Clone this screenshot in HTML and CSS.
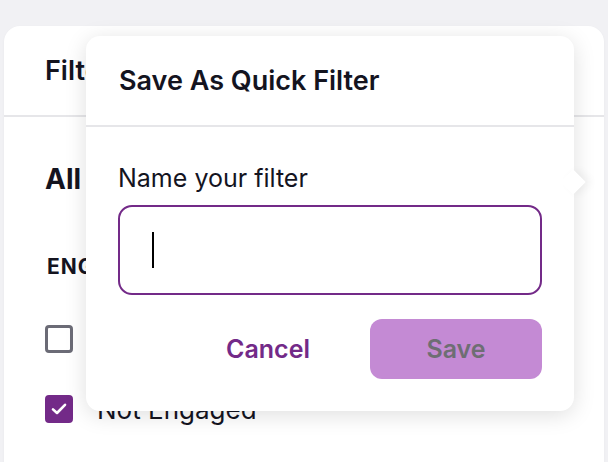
FILE: index.html
```html
<!DOCTYPE html>
<html>
<head>
<meta charset="utf-8">
<link rel="stylesheet" href="styles.css">
</head>
<body>
<div class="card">
  <div class="card-header"><span class="card-title">Filters</span></div>
  <div class="card-body">
    <div class="view-title">All</div>
    <div class="section-label">ENGAGEMENT</div>
    <ul class="options">
      <li class="option"><span class="checkbox"></span><span class="option-label">Engaged</span></li>
      <li class="option"><span class="checkbox checked"><svg viewBox="0 0 20 20" width="20" height="20"><path d="M4 10.4 L8 14 L16 5.8" fill="none" stroke="#fff" stroke-width="2.6" stroke-linecap="round" stroke-linejoin="round"/></svg></span><span class="option-label">Not Engaged</span></li>
    </ul>
  </div>
  <div class="popover">
    <div class="popover-header">Save As Quick Filter</div>
    <div class="popover-body">
      <label class="field-label">Name your filter</label>
      <div class="text-field"><span class="caret"></span></div>
      <div class="actions">
        <button class="btn btn-cancel">Cancel</button>
        <button class="btn btn-save">Save</button>
      </div>
    </div>
  </div>
</div>
</body>
</html>
```
FILE: styles.css
```css
* { box-sizing: border-box; }
html, body { margin: 0; padding: 0; }
body {
  background: #f1f1f4;
  font-family: Inter, "Noto Sans", sans-serif;
  color: #14141f;
  width: 608px;
  height: 462px;
  overflow: hidden;
}
.card {
  position: relative;
  margin: 26px 0 0 4px;
  width: 600px;
  height: 436px;
  background: #fff;
  border-radius: 16px 16px 0 0;
  box-shadow: 0 1px 3px rgba(0,0,0,0.04);
}
.card-header {
  height: 91px;
  display: flex;
  align-items: center;
  padding-left: 41px;
  border-bottom: 2px solid #e6e6e9;
}
.card-title {
  font-size: 27px;
  font-weight: 600;
}
.card-body {
  padding: 0 0 0 41px;
}
.view-title {
  margin-top: 45px;
  font-size: 28px;
  font-weight: 700;
  line-height: 34px;
}
.section-label {
  margin-top: 58px;
  margin-left: 2px;
  font-size: 21px;
  font-weight: 700;
  letter-spacing: 1px;
  line-height: 26px;
}
.options {
  list-style: none;
  margin: 45px 0 0 0;
  padding: 0;
}
.option {
  display: flex;
  align-items: center;
  height: 28px;
  margin-bottom: 42px;
}
.checkbox {
  width: 28px;
  height: 28px;
  border: 3px solid #6b6b76;
  border-radius: 4px;
  display: flex;
  align-items: center;
  justify-content: center;
  flex-shrink: 0;
}
.checkbox.checked {
  background: #732a88;
  border-color: #732a88;
}
.option-label {
  margin-left: 24px;
  font-size: 26px;
}
.popover {
  position: absolute;
  left: 82px;
  top: 10px;
  width: 488px;
  height: 375px;
  background: #fff;
  border-radius: 14px;
  box-shadow: 0 4px 22px rgba(0,0,0,0.13);
}
.popover::after {
  content: "";
  position: absolute;
  right: -8px;
  top: 137px;
  width: 18px;
  height: 18px;
  background: #fff;
  transform: rotate(45deg);
  box-shadow: 4px -4px 8px rgba(0,0,0,0.05);
}
.popover-header {
  position: relative;
  z-index: 1;
  height: 91px;
  display: flex;
  align-items: center;
  padding-left: 33px;
  font-size: 27px;
  font-weight: 600;
  border-bottom: 2px solid #e6e6e9;
}
.popover-body {
  position: relative;
  z-index: 1;
  padding: 0 32px 0 32px;
}
.field-label {
  display: block;
  margin-top: 36px;
  font-size: 25px;
  line-height: 30px;
  color: #14141f;
}
.text-field {
  margin-top: 12px;
  height: 90px;
  border: 2px solid #732a88;
  border-radius: 14px;
  display: flex;
  align-items: center;
  padding-left: 32px;
  background: #fff;
}
.caret {
  width: 2px;
  height: 36px;
  background: #000;
}
.actions {
  display: flex;
  justify-content: flex-end;
  gap: 16px;
  margin-top: 24px;
}
.btn {
  width: 172px;
  height: 60px;
  border: none;
  border-radius: 12px;
  font-family: inherit;
  font-size: 25px;
  font-weight: 600;
  background: transparent;
  padding: 0;
}
.btn-cancel {
  color: #732a88;
}
.btn-save {
  background: #c48ad4;
  color: #6e6e73;
}
```
